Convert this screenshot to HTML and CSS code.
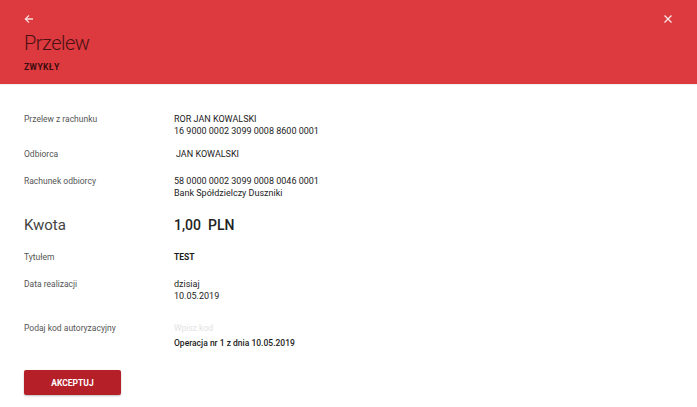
FILE: index.html
```html
<!DOCTYPE html>
<html lang="pl">
<head>
<meta charset="utf-8">
<title>Przelew</title>
<link rel="stylesheet" href="styles.css">
</head>
<body>
<header class="topbar">
  <div class="topbar-icons">
    <svg class="icon" width="10" height="10" viewBox="0 0 10 10" aria-hidden="true">
      <path d="M9 5H1.6M5 1.4L1.4 5 5 8.6" fill="none" stroke="#f7dede" stroke-width="1.3"/>
    </svg>
    <svg class="icon" width="10" height="10" viewBox="0 0 10 10" aria-hidden="true">
      <path d="M1.5 1.5l7 7M8.5 1.5l-7 7" fill="none" stroke="#f7e6e6" stroke-width="1.3"/>
    </svg>
  </div>
  <h1 class="title">Przelew</h1>
  <div class="subtitle">ZWYKŁY</div>
</header>
<main class="content">
  <div class="row row-first">
    <div class="label">Przelew z rachunku</div>
    <div class="value">ROR JAN KOWALSKI<br>16 9000 0002 3099 0008 8600 0001</div>
  </div>
  <div class="row row-s">
    <div class="label">Odbiorca</div>
    <div class="value value-indent">JAN KOWALSKI</div>
  </div>
  <div class="row row-m">
    <div class="label">Rachunek odbiorcy</div>
    <div class="value">58 0000 0002 3099 0008 0046 0001<br>Bank Spółdzielczy Duszniki</div>
  </div>
  <div class="row row-l row-big">
    <div class="label label-big">Kwota</div>
    <div class="value value-big">1,00&nbsp; PLN</div>
  </div>
  <div class="row row-l">
    <div class="label">Tytułem</div>
    <div class="value value-bold">TEST</div>
  </div>
  <div class="row row-m">
    <div class="label">Data realizacji</div>
    <div class="value">dzisiaj<br>10.05.2019</div>
  </div>
  <div class="row row-xl">
    <div class="label">Podaj kod autoryzacyjny</div>
    <div class="value">
      <input class="code-input" type="text" placeholder="Wpisz kod">
      <div class="operation">Operacja nr 1 z dnia 10.05.2019</div>
    </div>
  </div>
  <button class="accept" type="button">AKCEPTUJ</button>
</main>
</body>
</html>
```
FILE: styles.css
```css
* { box-sizing: border-box; }
html, body { margin: 0; padding: 0; }
body {
  width: 697px;
  height: 407px;
  overflow: hidden;
  background: #ffffff;
  font-family: Roboto, "Liberation Sans", Arial, sans-serif;
  color: #222;
}
.topbar {
  height: 84px;
  background: #dc3a3e;
  padding: 13px 24px 0 24px;
  box-shadow: 0 1px 1px rgba(0,0,0,0.06);
}
.topbar-icons {
  display: flex;
  justify-content: space-between;
  height: 12px;
  padding-top: 1px;
}
.icon { display: block; }
.title {
  margin: 5px 0 0 0;
  font-size: 20px;
  line-height: 26px;
  font-weight: 300;
  color: #4a1013;
  letter-spacing: -0.5px;
}
.subtitle {
  margin-top: 5px;
  font-size: 8.5px;
  line-height: 12px;
  font-weight: 700;
  color: #3a0c0e;
  letter-spacing: 0.4px;
}
.content {
  padding: 29px 24px 0 24px;
}
.row {
  display: grid;
  grid-template-columns: 150px 1fr;
  font-size: 8.5px;
  line-height: 12px;
}
.row-s { margin-top: 11px; }
.row-m { margin-top: 15px; }
.row-l { margin-top: 17px; }
.row-xl { margin-top: 20px; }
.label { color: #555; }
.value { color: #1c1c1c; font-weight: 400; font-size: 9px; }
.value-indent { padding-left: 2px; }
.value-bold { font-weight: 700; font-size: 8.5px; }
.row-big { line-height: 18px; }
.label-big { font-size: 15px; color: #444; font-weight: 400; }
.value-big { font-size: 14px; font-weight: 500; color: #222; }
.code-input {
  display: block;
  width: 140px;
  height: 12px;
  border: none;
  padding: 0;
  margin: 0;
  font-family: inherit;
  font-size: 8.5px;
  line-height: 12px;
  background: transparent;
  outline: none;
}
.code-input::placeholder { color: #e2e2e2; }
.operation { margin-top: 3px; font-weight: 500; font-size: 8.5px; }
.accept {
  display: block;
  margin-top: 21px;
  width: 97px;
  height: 25px;
  border: none;
  border-radius: 2px;
  background: #b52028;
  color: #fff;
  font-family: inherit;
  font-size: 8.5px;
  font-weight: 700;
  box-shadow: 0 1px 2px rgba(0,0,0,0.25);
  padding: 0;
}
```
